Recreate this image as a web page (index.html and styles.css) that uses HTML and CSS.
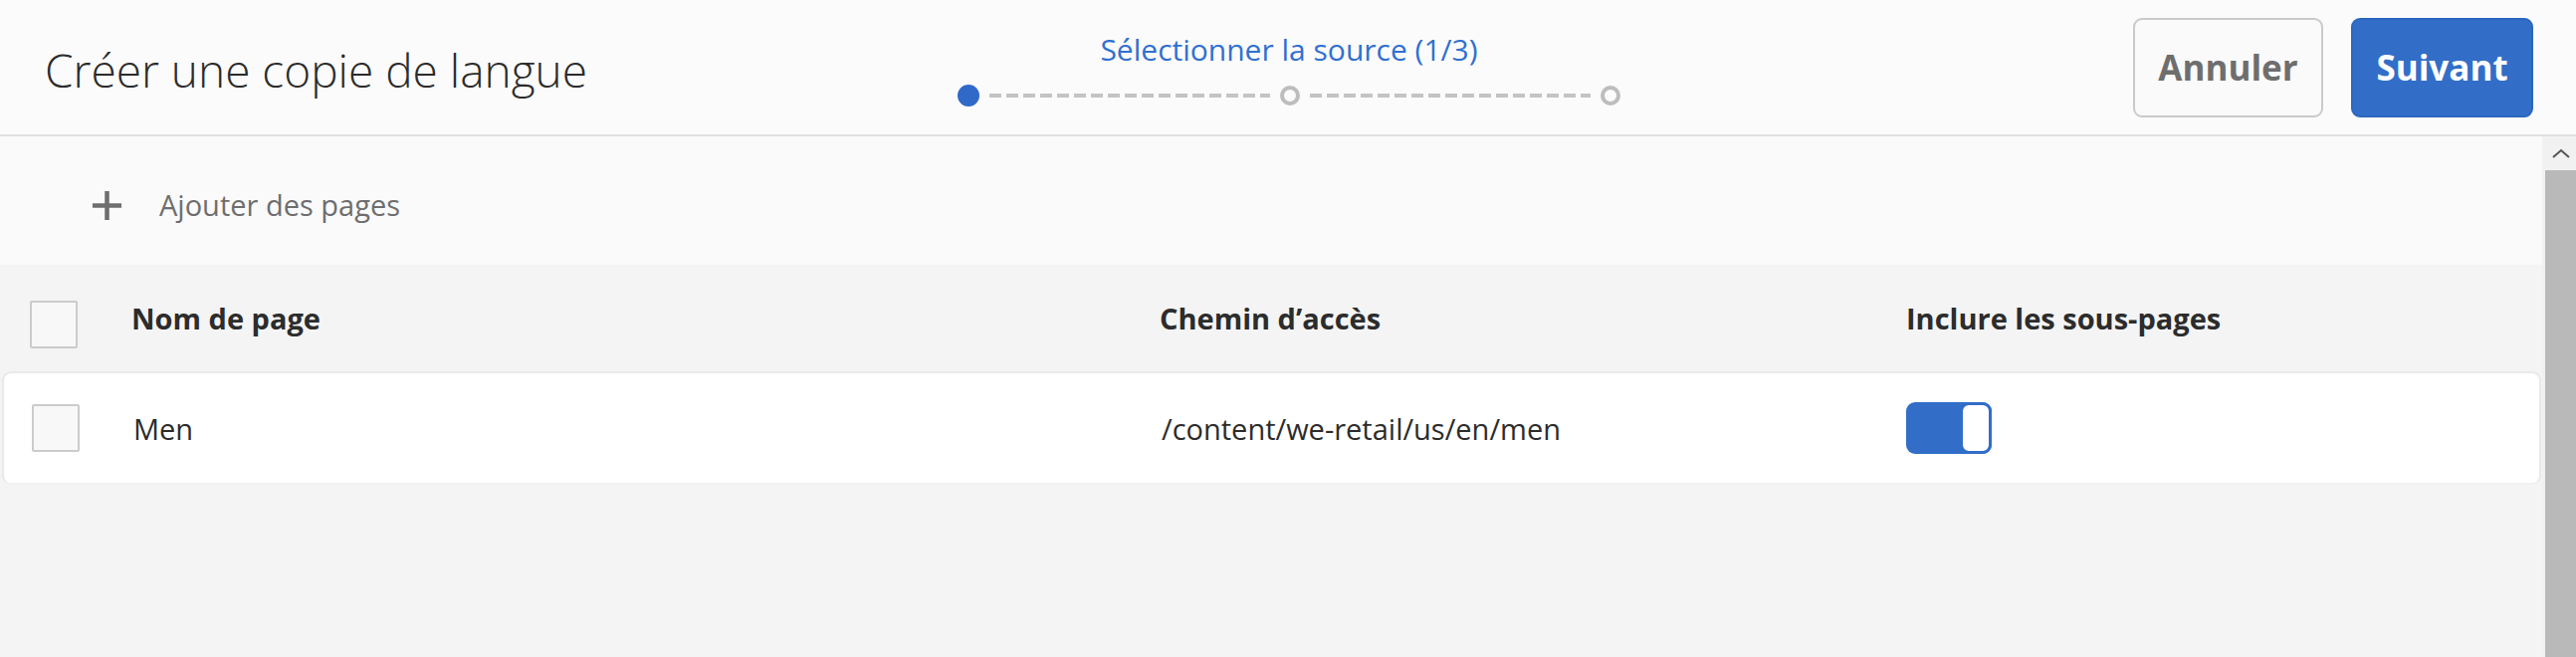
FILE: index.html
```html
<!DOCTYPE html>
<html lang="fr">
<head>
<meta charset="utf-8">
<title>Créer une copie de langue</title>
<link rel="stylesheet" href="styles.css">
</head>
<body>
<header class="header">
  <h1 class="title">Créer une copie de langue</h1>
  <div class="stepper">
    <div class="step-label">Sélectionner la source (1/3)</div>
    <div class="steps">
      <span class="dot dot-active"></span>
      <span class="dash"></span>
      <span class="dot dot-ring"></span>
      <span class="dash"></span>
      <span class="dot dot-ring"></span>
    </div>
  </div>
  <div class="actions">
    <button class="btn btn-secondary">Annuler</button>
    <button class="btn btn-primary">Suivant</button>
  </div>
</header>
<div class="main">
  <div class="content">
    <div class="addbar">
      <svg class="plus" width="31" height="31" viewBox="0 0 31 31"><path d="M15.5 1v29M1 15.5h29" stroke="#6e6e6e" stroke-width="4.5" fill="none"/></svg>
      <span class="add-label">Ajouter des pages</span>
    </div>
    <div class="table">
      <div class="trow thead">
        <span class="cb"></span>
        <span class="cell">Nom de page</span>
        <span class="cell">Chemin d’accès</span>
        <span class="cell">Inclure les sous-pages</span>
      </div>
      <div class="trow tbody">
        <span class="cb"></span>
        <span class="cell">Men</span>
        <span class="cell">/content/we-retail/us/en/men</span>
        <span class="cell"><span class="toggle"><span class="knob"></span></span></span>
      </div>
    </div>
  </div>
  <div class="scrollbar">
    <div class="sb-btn">
      <svg width="20" height="12" viewBox="0 0 20 12"><path d="M2 10l8-7 8 7" stroke="#555" stroke-width="2" fill="none"/></svg>
    </div>
    <div class="sb-thumb"></div>
  </div>
</div>
</body>
</html>
```
FILE: styles.css
```css
* { box-sizing: border-box; }
html, body { margin: 0; padding: 0; }
body {
  width: 2588px;
  height: 660px;
  overflow: hidden;
  background: #f4f4f4;
  font-family: "Open Sans", "Liberation Sans", sans-serif;
  color: #2c2c2c;
}
.header {
  height: 137px;
  background: #fbfbfb;
  border-bottom: 2px solid #e0e0e0;
  display: grid;
  grid-template-columns: 1fr auto 1fr;
  align-items: center;
  padding: 0 43px 0 45px;
}
.title {
  margin: 0;
  font-weight: 300;
  font-size: 46px;
  color: #2c2c2c;
  justify-self: start;
  position: relative;
  top: 2px;
}
.stepper {
  display: flex;
  flex-direction: column;
  align-items: center;
  padding-top: 2px;
}
.step-label {
  font-size: 30px;
  color: #3070d0;
  line-height: 38px;
}
.steps {
  display: flex;
  align-items: center;
  margin-top: 16px;
}
.dot {
  display: block;
  border-radius: 50%;
}
.dot-active {
  width: 22px;
  height: 22px;
  background: #3069c8;
}
.dot-ring {
  width: 20px;
  height: 20px;
  border: 4px solid #bdbdbd;
  background: #fbfbfb;
}
.dash {
  display: block;
  width: 282px;
  height: 4px;
  margin: 0 10px;
  background: repeating-linear-gradient(to right, #c4c4c4 0 12px, transparent 12px 17px);
}
.actions {
  justify-self: end;
  display: flex;
  gap: 28px;
}
.btn {
  height: 100px;
  border-radius: 9px;
  font-family: "Open Sans", "Liberation Sans", sans-serif;
  font-weight: 700;
  font-size: 35px;
  padding: 0;
  cursor: pointer;
}
.btn-secondary {
  width: 191px;
  background: #fafafa;
  border: 2px solid #cacaca;
  color: #6e6e6e;
}
.btn-primary {
  width: 183px;
  background: #326ec8;
  border: 2px solid #2c66be;
  color: #ffffff;
}
.main {
  display: flex;
  height: 523px;
}
.content {
  flex: 1;
  display: flex;
  flex-direction: column;
  background: #f4f4f4;
}
.addbar {
  height: 129px;
  background: #fafafa;
  display: flex;
  align-items: center;
  padding-left: 92px;
  padding-top: 9px;
  gap: 37px;
}
.plus { display: block; }
.add-label {
  font-size: 29px;
  color: #6e6e6e;
  position: relative;
  top: -1px;
}
.trow {
  display: grid;
  grid-template-columns: 102px 1033px 750px 1fr;
  align-items: center;
  padding-left: 30px;
  font-size: 29px;
}
.thead {
  height: 107px;
  background: #f4f4f4;
  font-weight: 700;
  color: #2c2c2c;
}
.thead .cb { position: relative; top: 6px; }
.tbody {
  height: 114px;
  background: #ffffff;
  border: 2px solid #e9e9e9;
  border-bottom-color: #f0f0f0;
  border-radius: 9px;
  padding-left: 28px;
  margin-left: 2px;
  margin-right: 1px;
}
.cb {
  display: block;
  width: 48px;
  height: 48px;
  border: 2px solid #cbcbcb;
  background: #f8f8f8;
  border-radius: 2px;
}
.cell { white-space: nowrap; }
.toggle {
  display: flex;
  justify-content: flex-end;
  width: 86px;
  height: 52px;
  margin-left: -2px;
  background: #326ec8;
  border-radius: 9px;
}
.knob {
  display: block;
  width: 32px;
  height: 52px;
  background: #ffffff;
  border: 3px solid #326ec8;
  border-radius: 9px;
}
.scrollbar {
  width: 34px;
  background: #f1f1f1;
  display: flex;
  flex-direction: column;
  align-items: flex-end;
}
.sb-btn {
  width: 31px;
  height: 34px;
  display: flex;
  align-items: center;
  justify-content: center;
}
.sb-thumb {
  width: 31px;
  flex: 1;
  background: #b9b9b9;
}
```
